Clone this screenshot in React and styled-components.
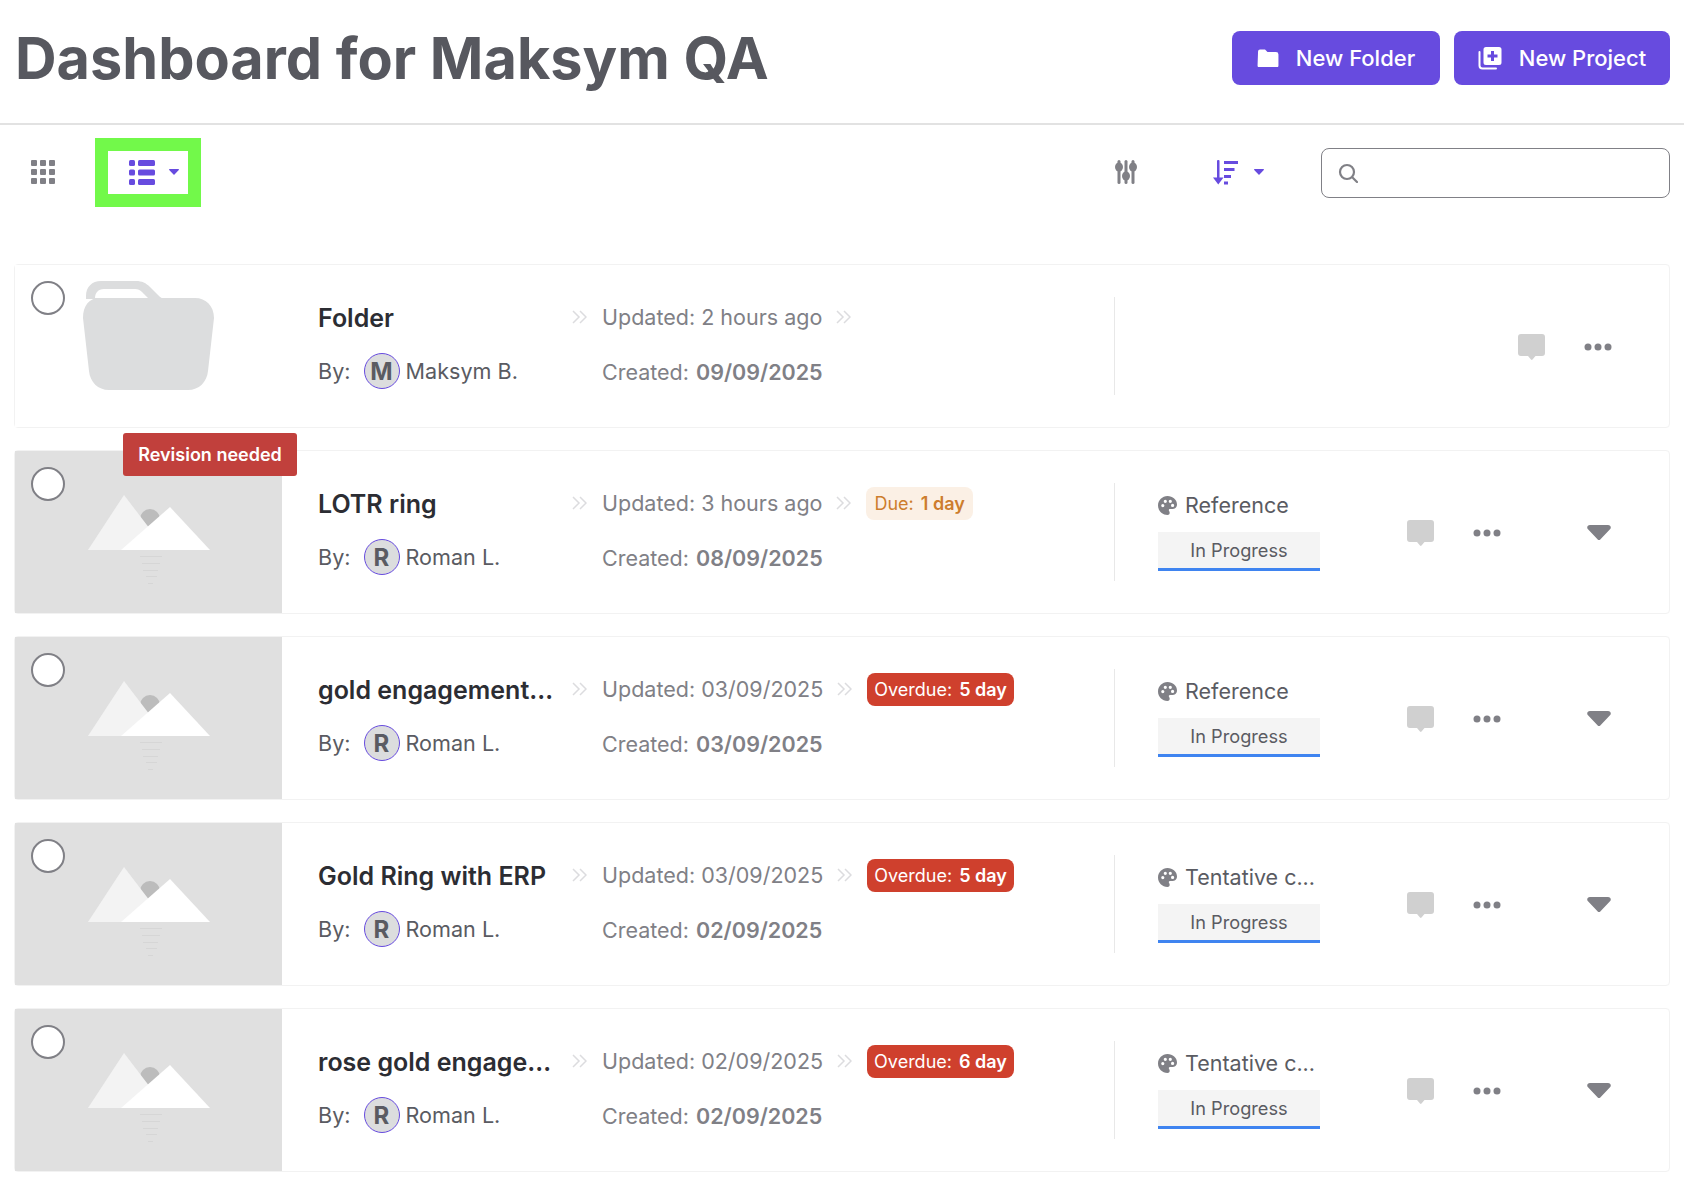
import React from 'react'
import styled, { createGlobalStyle } from 'styled-components'

const GlobalStyle = createGlobalStyle`
  html, body { margin: 0; padding: 0; background: #fff; }
  body { font-family: Inter, "Liberation Sans", sans-serif; color: #5a5b62; }
  * { box-sizing: border-box; }
`

const Page = styled.div`
  width: 1684px;
  height: 1194px;
  overflow: hidden;
`

///////////////////////////////////////////////////////////////////////////////////

const Header = styled.header`
  display: flex;
  align-items: center;
  justify-content: space-between;
  height: 125px;
  padding: 0 14px 7px 15px;
  border-bottom: 2px solid #e2e2e2;
`

const Title = styled.h1`
  margin: 0;
  font-size: 57.6px;
  font-weight: 700;
  color: #57585f;
  white-space: nowrap;
`

const HeaderActions = styled.div`
  display: flex;
  gap: 14px;
`

const PrimaryButton = styled.button`
  display: flex;
  align-items: center;
  justify-content: center;
  gap: 17px;
  height: 54px;
  width: ${p => p.$w}px;
  border: 0;
  border-radius: 8px;
  background: #674bdf;
  color: #fff;
  font: 500 22px Inter, sans-serif;
`

///////////////////////////////////////////////////////////////////////////////////

const Toolbar = styled.div`
  display: flex;
  align-items: center;
  height: 94px;
  padding: 0 14px 0 31px;
`

const ListSwitch = styled.div`
  display: flex;
  align-items: center;
  justify-content: center;
  gap: 14px;
  width: 80px;
  height: 43px;
  margin: 0 0 0 53px;
  padding-left: 12px;
  outline: 13px solid #72f94a;
  background: #fff;
`

const ToolbarRight = styled.div`
  display: flex;
  align-items: center;
  margin-left: auto;
`

const SortButton = styled.div`
  display: flex;
  align-items: center;
  gap: 16px;
  margin: 0 57px 0 76px;
`

const Search = styled.div`
  display: flex;
  align-items: center;
  width: 349px;
  height: 50px;
  margin-top: 1px;
  padding-left: 16px;
  border: 1px solid #808086;
  border-radius: 8px;
`

///////////////////////////////////////////////////////////////////////////////////

const List = styled.div`
  display: flex;
  flex-direction: column;
  gap: 22px;
  padding: 45px 14px 0 14px;
`

const Row = styled.article`
  position: relative;
  display: flex;
  align-items: stretch;
  height: 164px;
  border: 1px solid #f2f2f2;
  border-radius: 4px;
`

const Thumb = styled.div`
  display: flex;
  justify-content: center;
  flex: 0 0 267px;
  padding-top: ${p => (p.$folder ? 16 : 44)}px;
  background: ${p => (p.$folder ? '#fff' : '#e0e0e0')};
`

const Check = styled.span`
  position: absolute;
  top: 16px;
  left: 16px;
  width: 34px;
  height: 34px;
  border: 2px solid #808086;
  border-radius: 50%;
  background: #fff;
`

const Flag = styled.div`
  position: absolute;
  top: -18px;
  left: 108px;
  width: 174px;
  height: 43px;
  display: flex;
  align-items: center;
  justify-content: center;
  border-radius: 3px;
  background: #c1403c;
  color: #fff;
  font-size: 18px;
  font-weight: 600;
`

const Info = styled.div`
  flex: 0 0 290px;
  min-width: 0;
  padding: 0 16px 0 36px;
`

const Name = styled.h2`
  margin: 33px 0 0;
  height: 40px;
  line-height: 40px;
  font-size: 25px;
  font-weight: 600;
  color: #2c2d33;
  white-space: nowrap;
  overflow: hidden;
  text-overflow: ellipsis;
`

const ByLine = styled.div`
  display: flex;
  align-items: center;
  margin-top: 15px;
  height: 36px;
  font-size: 21.6px;
  white-space: nowrap;
`

const Avatar = styled.span`
  display: flex;
  align-items: center;
  justify-content: center;
  width: 36px;
  height: 36px;
  margin: 0 6px 0 13px;
  border: 1.5px solid #674bdf;
  border-radius: 50%;
  background: #dcddde;
  font-size: 24px;
  font-weight: 700;
`

const Dates = styled.div`
  flex: 0 0 542px;
  padding-top: 32px;
  color: #808086;
  font-size: 21.5px;
  white-space: nowrap;
`

const DateRow = styled.div`
  display: flex;
  align-items: center;
  height: 40px;
`

const CreatedRow = styled(DateRow)`
  margin-top: 15px;
  padding-left: 30px;
  b { font-weight: 600; margin-left: 7px; }
`

const Updated = styled.span`
  margin: 0 14px 0 15px;
`

const Pill = styled.span`
  display: flex;
  align-items: center;
  gap: 7px;
  height: 33px;
  margin-left: 15px;
  padding: 0 ${p => (p.$over ? 7 : 8)}px;
  border-radius: 8px;
  background: ${p => (p.$over ? '#cf402d' : '#fbf0e5')};
  color: ${p => (p.$over ? '#fff' : '#cd7d2d')};
  font-size: 18px;
  b { font-weight: 600; }
`

const Status = styled.div`
  flex: 0 0 ${p => (p.$empty ? 404 : 293)}px;
  margin: 32px 0 32px;
  padding: 0 0 0 43px;
  border-left: 1px solid #e8e8e8;
`

const Kind = styled.div`
  display: flex;
  align-items: center;
  gap: 8px;
  height: 44px;
  font-size: 21.5px;
  white-space: nowrap;
`

const Progress = styled.div`
  display: flex;
  align-items: center;
  justify-content: center;
  width: 162px;
  height: 39px;
  margin-top: 5px;
  background: #f4f4f4;
  border-bottom: 3px solid #3f84f0;
  font-size: 18.2px;
`

const Actions = styled.div`
  display: flex;
  align-items: center;
  padding-top: 1px;
`

const CommentSlot = styled.div`
  display: flex;
  width: 66px;
`

const DotsSlot = styled.div`
  display: flex;
  width: 114px;
`

///////////////////////////////////////////////////////////////////////////////////

const FolderIcon = ({ size = 22, color = '#fff' }) => (
  <svg width={size} height={size * 0.86} viewBox="0 0 22 19" fill={color}>
    <path d="M1 2.500A2 2 0 0 1 3 .5h5l2.500 2.500H19a2.500 2.500 0 0 1 2.500 2.500v11A2 2 0 0 1 19.500 18.500h-17A2 2 0 0 1 .5 16.500z" />
  </svg>
)

const ProjectIcon = () => (
  <svg width="24" height="24" viewBox="0 0 24 24" fill="none">
    <path d="M1.500 6v13.500A3 3 0 0 0 4.500 22.500H18" stroke="#fff" strokeWidth="2" strokeLinecap="round" />
    <path fillRule="evenodd" fill="#fff" d="M8 1h13a2.500 2.500 0 0 1 2.500 2.500v13a2.500 2.500 0 0 1-2.500 2.500H8a2.500 2.500 0 0 1-2.500-2.500v-13A2.500 2.500 0 0 1 8 1zm5 4v3.500H9.500v3H13V15h3v-3.500h3.500v-3H16V5z" />
  </svg>
)

const GridIcon = () => (
  <svg width="24" height="24" viewBox="0 0 24 24" fill="#808086">
    {[0, 9, 18].flatMap(y =>
      [0, 9, 18].map(x => <rect key={`${x}-${y}`} x={x} y={y} width="6" height="6" rx="1" />)
    )}
  </svg>
)

const ListIcon = () => (
  <svg width="26" height="25" viewBox="0 0 26 25" fill="#674bdf">
    {[0, 9.5, 19].map(y => (
      <g key={y}>
        <rect x="0" y={y} width="6" height="6" rx="1.5" />
        <rect x="9" y={y} width="17" height="6" rx="1.5" />
      </g>
    ))}
  </svg>
)

const Caret = ({ color = '#674bdf' }) => (
  <svg width="10" height="6" viewBox="0 0 10 6" fill={color}>
    <path d="M.7 0h8.600c.6 0 .9.700.5 1.100L5.500 5.600a.7.7 0 0 1-1 0L.2 1.100C-.2.700.1 0 .7 0z" />
  </svg>
)

const SlidersIcon = () => (
  <svg width="22" height="24" viewBox="0 0 22 24" fill="#808086">
    <rect x="2.500" y="0" width="3" height="24" rx="1.500" />
    <rect x="9.500" y="0" width="3" height="24" rx="1.500" />
    <rect x="16.500" y="0" width="3" height="24" rx="1.500" />
    <ellipse cx="4" cy="7" rx="4" ry="4.500" />
    <ellipse cx="11" cy="16" rx="4" ry="4.500" />
    <ellipse cx="18" cy="7" rx="4" ry="4.500" />
  </svg>
)

const SortIcon = () => (
  <svg width="25" height="25" viewBox="0 0 25 25" fill="#674bdf">
    <rect x="4" y="0" width="2.500" height="21" rx="1" />
    <path d="M0 17.500h10.500L5.250 24.500z" />
    <rect x="11" y="1" width="14" height="3" />
    <rect x="11" y="8" width="10.500" height="3" />
    <rect x="11" y="15" width="7" height="3" />
    <rect x="11" y="21.500" width="4" height="3" />
  </svg>
)

const SearchIcon = () => (
  <svg width="20" height="20" viewBox="0 0 20 20" fill="none" stroke="#808086" strokeWidth="2.200">
    <circle cx="9" cy="9" r="7" />
    <path d="M14.500 14.500L19 19" strokeLinecap="round" />
  </svg>
)

const BigFolder = () => (
  <svg width="131" height="109" viewBox="0 0 131 109" fill="#dcddde">
    <path
      fillRule="evenodd"
      d="M3 20V15C3 6 9 0 18 0h35c6 0 10 2 14 6l8 8c2 2 4 4 8 4H3zM12 17h53l-6-6c-2-2-4-3-7-3H21c-6 0-9 4-9 9z"
    />
    <path d="M16 17h96c11 0 19 8 19 20l-6 53c-1 11-9 19-20 19H26c-11 0-19-8-20-19L0 37c0-12 6-20 16-20z" />
  </svg>
)

const Placeholder = () => (
  <svg width="122" height="90" viewBox="0 0 122 90">
    <circle cx="62" cy="24" r="10" fill="#bcbcbc" />
    <path d="M0 55L36 0l42 55z" fill="#f3f3f3" />
    <path d="M33 55L82 12l40 43z" fill="#fff" />
    <g fill="#d6d6d6">
      <rect x="52" y="61" width="22" height="1" />
      <rect x="54" y="68" width="18" height="1" />
      <rect x="55" y="75" width="15" height="1" />
      <rect x="58" y="81" width="11" height="1" />
      <rect x="60" y="88" width="5" height="1" />
    </g>
  </svg>
)

const Chevrons = () => (
  <svg width="15" height="14" viewBox="0 0 15 14" fill="none" stroke="#dcdcdf" strokeWidth="1.500">
    <path d="M1 1l6 6-6 6M8 1l6 6-6 6" />
  </svg>
)

const PaletteIcon = () => (
  <svg width="19" height="19" viewBox="0 0 19 19">
    <path
      fill="#808086"
      fillRule="evenodd"
      d="M9.500 0C14.700 0 19 3.700 19 8.400c0 3-2.400 4.600-5 4.600h-2c-1 0-1.500 1-1 1.800.4.700.7 1.200.7 1.900 0 1.300-1 2.300-2.200 2.300C4.200 19 0 14.700 0 9.500S4.300 0 9.500 0zM4.800 8a1.600 1.600 0 1 0 0 3.200 1.600 1.600 0 0 0 0-3.200zm2.500-4.300a1.600 1.600 0 1 0 0 3.200 1.600 1.600 0 0 0 0-3.200zm5 0a1.600 1.600 0 1 0 0 3.200 1.600 1.600 0 0 0 0-3.200zm2.300 4.100a1.600 1.600 0 1 0 0 3.200 1.600 1.600 0 0 0 0-3.200z"
    />
  </svg>
)

const CommentIcon = () => (
  <svg width="27" height="26" viewBox="0 0 27 26" fill="#d0d0d0">
    <path d="M3 0h21a3 3 0 0 1 3 3v16a3 3 0 0 1-3 3h-6.500l-3 3.500a1 1 0 0 1-1.500 0L10 22H3a3 3 0 0 1-3-3V3a3 3 0 0 1 3-3z" />
  </svg>
)

const DotsIcon = () => (
  <svg width="28" height="8" viewBox="0 0 28 8" fill="#808086">
    <circle cx="4" cy="4" r="3.500" />
    <circle cx="14" cy="4" r="3.500" />
    <circle cx="24" cy="4" r="3.500" />
  </svg>
)

const RowCaret = () => (
  <svg width="24" height="15" viewBox="0 0 24 15" fill="#808086">
    <path d="M3 0h18c2.500 0 3.700 2.500 2 4.300l-9.500 10a2 2 0 0 1-3 0L1 4.300C-.7 2.500.5 0 3 0z" />
  </svg>
)

///////////////////////////////////////////////////////////////////////////////////

const projects = [
  { name: 'LOTR ring', by: 'Roman L.', updated: '3 hours ago', created: '08/09/2025', kind: 'Reference', flag: true, due: '1 day' },
  { name: 'gold engagement ring', by: 'Roman L.', updated: '03/09/2025', created: '03/09/2025', kind: 'Reference', over: '5 day' },
  { name: 'Gold Ring with ERP', by: 'Roman L.', updated: '03/09/2025', created: '02/09/2025', kind: 'Tentative c...', over: '5 day' },
  { name: 'rose gold engagement', by: 'Roman L.', updated: '02/09/2025', created: '02/09/2025', kind: 'Tentative c...', over: '6 day' },
]

function RowBody({ name, by, updated, created, children }) {
  return (
    <>
      <Info>
        <Name>{name}</Name>
        <ByLine>
          By:
          <Avatar>{by[0]}</Avatar>
          {by}
        </ByLine>
      </Info>
      <Dates>
        <DateRow>
          <Chevrons />
          <Updated>Updated: {updated}</Updated>
          <Chevrons />
          {children}
        </DateRow>
        <CreatedRow>
          Created: <b>{created}</b>
        </CreatedRow>
      </Dates>
    </>
  )
}

export default function App() {
  return (
    <Page>
      <GlobalStyle />
      <Header>
        <Title>Dashboard for Maksym QA</Title>
        <HeaderActions>
          <PrimaryButton $w={208}>
            <FolderIcon />
            New Folder
          </PrimaryButton>
          <PrimaryButton $w={216}>
            <ProjectIcon />
            New Project
          </PrimaryButton>
        </HeaderActions>
      </Header>

      <Toolbar>
        <GridIcon />
        <ListSwitch>
          <ListIcon />
          <Caret />
        </ListSwitch>
        <ToolbarRight>
          <SlidersIcon />
          <SortButton>
            <SortIcon />
            <Caret />
          </SortButton>
          <Search>
            <SearchIcon />
          </Search>
        </ToolbarRight>
      </Toolbar>

      <List>
        <Row>
          <Check />
          <Thumb $folder>
            <BigFolder />
          </Thumb>
          <RowBody name="Folder" by="Maksym B." updated="2 hours ago" created="09/09/2025" />
          <Status $empty />
          <Actions>
            <CommentSlot>
              <CommentIcon />
            </CommentSlot>
            <DotsSlot>
              <DotsIcon />
            </DotsSlot>
          </Actions>
        </Row>

        {projects.map(p => (
          <Row key={p.name}>
            <Check />
            {p.flag && <Flag>Revision needed</Flag>}
            <Thumb>
              <Placeholder />
            </Thumb>
            <RowBody {...p}>
              {p.due && (
                <Pill>
                  Due: <b>{p.due}</b>
                </Pill>
              )}
              {p.over && (
                <Pill $over>
                  Overdue: <b>{p.over}</b>
                </Pill>
              )}
            </RowBody>
            <Status>
              <Kind>
                <PaletteIcon />
                {p.kind}
              </Kind>
              <Progress>In Progress</Progress>
            </Status>
            <Actions>
              <CommentSlot>
                <CommentIcon />
              </CommentSlot>
              <DotsSlot>
                <DotsIcon />
              </DotsSlot>
              <RowCaret />
            </Actions>
          </Row>
        ))}
      </List>
    </Page>
  )
}
